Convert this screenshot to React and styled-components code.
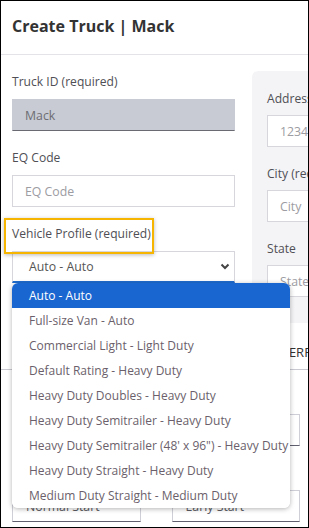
import React from 'react';
import styled, { createGlobalStyle } from 'styled-components';

const Global = createGlobalStyle`
  *, *::before, *::after { box-sizing: border-box; }
  html, body { margin: 0; padding: 0; background: #fff; }
  body { font-family: "Open Sans", "Liberation Sans", sans-serif; }
`;

const Frame = styled.div`
  width: 309px;
  height: 528px;
  border: 1px solid #000;
  overflow: hidden;
  position: relative;
  background: #fff;
`;

const Page = styled.div`
  width: 620px;
`;

const Header = styled.header`
  height: 54px;
  border-bottom: 1px solid #e3e3e8;
  padding: 14px 0 0 11px;
`;

const Title = styled.h1`
  margin: 0;
  font-size: 16px;
  line-height: 23px;
  font-weight: 700;
  color: #333;
`;

const TopRow = styled.div`
  display: flex;
  align-items: stretch;
  gap: 17px;
  padding: 16px 0 0 11px;
`;

const LeftCol = styled.div`
  width: 223px;
  flex: none;
  padding-top: 2px;
`;

const SidePanel = styled.div`
  flex: 1;
  background: #f4f4f6;
  border-radius: 6px 6px 0 0;
  padding: 19px 15px 26px 15px;
`;

const Field = styled.div`
  position: relative;
  & + & {
    margin-top: 18px;
  }
`;

const Label = styled.div`
  position: relative;
  display: block;
  font-size: 12.1px;
  line-height: 18px;
  color: #4f4f55;
  margin-bottom: 8px;
  white-space: nowrap;
  ${(p) =>
    p.$highlight &&
    `
    &::after {
      content: "";
      position: absolute;
      left: -8px;
      top: -7px;
      width: 150px;
      height: 36px;
      border: 2px solid #f6b500;
      box-shadow: 0 1px 4px rgba(0,0,0,0.28);
      z-index: 3;
    }
  `}
`;

const SideLabel = styled(Label)`
  margin-bottom: 7px;
`;

const Input = styled.div`
  height: 32px;
  display: flex;
  align-items: center;
  padding-left: 12px;
  font-size: 12.3px;
  white-space: nowrap;
  overflow: hidden;
  color: ${(p) => (p.$disabled ? '#6d6d73' : '#9c9ca2')};
  background: ${(p) => (p.$disabled ? '#c8cbd3' : '#fff')};
  border: 1px solid ${(p) => (p.$disabled ? '#c8cbd3' : '#d6d6dc')};
  border-bottom-color: ${(p) => (p.$disabled ? '#6a6a72' : '#d6d6dc')};
`;

const SideInput = styled(Input)`
  width: 260px;
`;

const Select = styled.div`
  position: relative;
  height: 32px;
  display: flex;
  align-items: center;
  justify-content: space-between;
  padding: 0 4px 0 16px;
  font-size: 12.3px;
  color: #555;
  background: #fff;
  border: 1px solid #d6d6dc;
  border-bottom: 2px solid #1f6ccf;
`;

const Menu = styled.ul`
  position: absolute;
  left: -1px;
  top: calc(100% + 2px);
  width: 278px;
  margin: 0;
  padding: 0;
  list-style: none;
  background: #fff;
  border-radius: 6px;
  box-shadow: 0 1px 5px rgba(0, 0, 0, 0.3);
  overflow: hidden;
  z-index: 5;
`;

const Option = styled.li`
  height: 25px;
  display: flex;
  align-items: center;
  padding-left: 17px;
  font-size: 12px;
  white-space: nowrap;
  color: ${(p) => (p.$active ? '#fff' : '#6b5f6b')};
  background: ${(p) => (p.$active ? '#1a66d1' : '#fff')};
`;

const Tabs = styled.div`
  display: flex;
  padding-left: 11px;
  border-bottom: 1px solid #c9c9d2;
  height: 47px;
`;

const Tab = styled.div`
  padding: 20px 12px 0 12px;
  font-size: 13px;
  line-height: 18px;
  color: #333;
  white-space: nowrap;
  border-bottom: 2px solid ${(p) => (p.$active ? '#1a66d1' : 'transparent')};
  margin-bottom: -1px;
`;

const Lower = styled.div`
  width: 299px;
  padding: 18px 0 0 11px;
  display: grid;
  grid-template-columns: 1fr 1fr;
  column-gap: 31px;
  row-gap: 18px;
  & > ${Field} + ${Field} {
    margin-top: 0;
  }
`;

const LowerInput = styled(Input)`
  color: #5a5a60;
  padding-left: 13px;
  border-color: #cfcfd8;
  border-bottom-color: #5f5f70;
`;

const Chevron = () => (
  <svg width="10" height="7" viewBox="0 0 10 7" aria-hidden="true">
    <polyline points="1.5,1.5 5,5 8.5,1.5" fill="none" stroke="#444" strokeWidth="2" />
  </svg>
);

const options = [
  'Auto - Auto',
  'Full-size Van - Auto',
  'Commercial Light - Light Duty',
  'Default Rating - Heavy Duty',
  'Heavy Duty Doubles - Heavy Duty',
  'Heavy Duty Semitrailer - Heavy Duty',
  'Heavy Duty Semitrailer (48\' x 96") - Heavy Duty',
  'Heavy Duty Straight - Heavy Duty',
  'Medium Duty Straight - Medium Duty',
];

export default function App() {
  return (
    <>
      <Global />
      <Frame>
        <Page>
          <Header>
            <Title>Create Truck | Mack</Title>
          </Header>
          <TopRow>
            <LeftCol>
              <Field>
                <Label>Truck ID (required)</Label>
                <Input $disabled>Mack</Input>
              </Field>
              <Field>
                <Label>EQ Code</Label>
                <Input>EQ Code</Input>
              </Field>
              <Field>
                <Label $highlight>Vehicle Profile (required)</Label>
                <Select>
                  <span>Auto - Auto</span>
                  <Chevron />
                  <Menu>
                    {options.map((o, i) => (
                      <Option key={o} $active={i === 0}>
                        {o}
                      </Option>
                    ))}
                  </Menu>
                </Select>
              </Field>
            </LeftCol>
            <SidePanel>
              <Field>
                <SideLabel>Address (required)</SideLabel>
                <SideInput>1234 Main Street</SideInput>
              </Field>
              <Field>
                <SideLabel>City (required)</SideLabel>
                <SideInput>City</SideInput>
              </Field>
              <Field>
                <SideLabel>State</SideLabel>
                <SideInput>State</SideInput>
              </Field>
            </SidePanel>
          </TopRow>
          <Tabs>
            <Tab $active>GENERAL</Tab>
            <Tab>SHIFTS</Tab>
            <Tab>SCHEDULE</Tab>
            <Tab>PREFERRED START</Tab>
          </Tabs>
          <Lower>
            <Field>
              <Label>Start Time</Label>
              <LowerInput>08:00</LowerInput>
            </Field>
            <Field>
              <Label>End Time</Label>
              <LowerInput>17:00</LowerInput>
            </Field>
            <Field>
              <Label>Start Type</Label>
              <LowerInput>Normal Start</LowerInput>
            </Field>
            <Field>
              <Label>Alternate</Label>
              <LowerInput>Early Start</LowerInput>
            </Field>
          </Lower>
        </Page>
      </Frame>
    </>
  );
}
